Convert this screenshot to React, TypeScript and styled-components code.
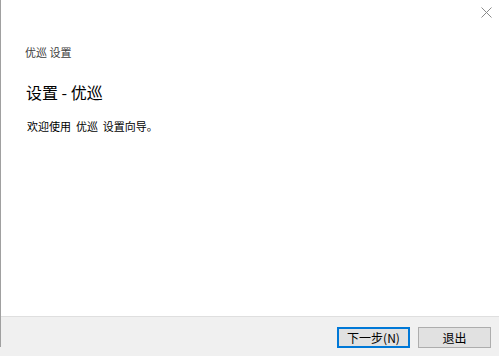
import React from "react"
import styled, { createGlobalStyle } from "styled-components"

const GlobalStyle = createGlobalStyle`
  html, body {
    margin: 0;
    padding: 0;
    background: #ffffff;
  }
  body {
    font-family: "Noto Sans CJK SC", "Noto Sans", sans-serif;
  }
`

const Window = styled.div`
  position: relative;
  width: 499px;
  height: 356px;
  display: flex;
  flex-direction: column;
  box-sizing: border-box;
  background: #ffffff;
`

const LeftEdge = styled.div`
  position: absolute;
  left: 0;
  top: 0;
  width: 1px;
  height: 347px;
  background: #a0a0a0;
`

const CloseButton = styled.button`
  position: absolute;
  top: 6px;
  right: 7px;
  width: 12px;
  height: 12px;
  padding: 0;
  border: none;
  background: transparent;
  display: flex;
  align-items: center;
  justify-content: center;
`

const Body = styled.main`
  flex: 1;
  padding: 42px 0 0 25px;
  display: flex;
  flex-direction: column;
`

const Caption = styled.div`
  font-size: 11px;
  line-height: 20px;
  color: #3c3c3c;
`

const Heading = styled.h1`
  margin: 18px 0 0 1px;
  font-size: 16px;
  font-weight: 400;
  line-height: 24px;
  color: #000000;
`

const Text = styled.p`
  margin: 13px 0 0 2px;
  font-size: 11px;
  line-height: 18px;
  color: #000000;
  white-space: pre;
`

const Footer = styled.footer`
  height: 40px;
  border-top: 1px solid #dfdfdf;
  background: #f0f0f0;
  display: flex;
  align-items: flex-start;
  justify-content: flex-end;
  gap: 8px;
  padding: 10px 8px 0 0;
  box-sizing: border-box;
`

const Button = styled.button<{ $primary?: boolean }>`
  width: 73px;
  height: 21px;
  box-sizing: border-box;
  padding: 0;
  background: #e1e1e1;
  border: ${p => (p.$primary ? "2px solid #0078d7" : "1px solid #adadad")};
  font-family: "Noto Sans CJK SC", "Noto Sans", sans-serif;
  font-size: 12px;
  line-height: 17px;
  color: #000000;
`

const App = () => (
  <Window>
    <GlobalStyle />
    <LeftEdge />
    <CloseButton aria-label="关闭">
      <svg width="11" height="11" viewBox="0 0 11 11">
        <path d="M0.5 0.5 L10.5 10.5 M10.5 0.5 L0.5 10.5" stroke="#8a8a8a" strokeWidth="1" />
      </svg>
    </CloseButton>
    <Body>
      <Caption>优巡 设置</Caption>
      <Heading>设置 - 优巡</Heading>
      <Text>{"欢迎使用  优巡  设置向导。"}</Text>
    </Body>
    <Footer>
      <Button $primary>下一步(N)</Button>
      <Button>退出</Button>
    </Footer>
  </Window>
)

export default App
